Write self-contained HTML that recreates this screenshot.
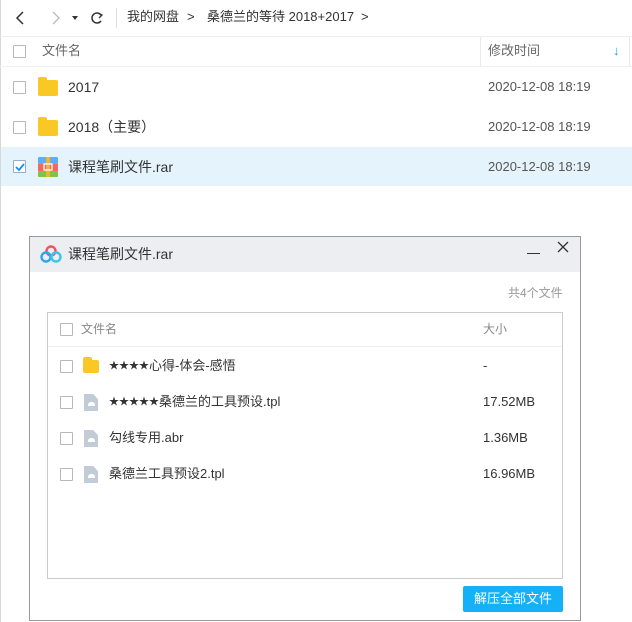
<!DOCTYPE html>
<html><head><meta charset="utf-8"><style>
*{margin:0;padding:0;box-sizing:border-box}
body{width:632px;height:622px;background:#fff;font-family:"Liberation Sans","Noto Sans CJK SC",sans-serif;font-size:13px;color:#333;position:relative;overflow:hidden}
.a{position:absolute}
.cb{position:absolute;width:13px;height:13px;border:1px solid #b8b8b8;background:#fff;border-radius:1px}
.t{position:absolute;white-space:nowrap;line-height:18px;height:18px}
.s{font-size:10px;vertical-align:1px}
.fold{position:absolute;width:20px;height:16px;background:#f9c824;border-radius:2px}
.fold:before{content:"";position:absolute;left:0;top:-3px;width:9px;height:4px;background:#f9c824;border-radius:2px 2px 0 0}
.doc{position:absolute;width:14px;height:17px;background:#c1ccd7;clip-path:polygon(0 0,65% 0,100% 30%,100% 100%,0 100%)}
.doc:after{content:"";position:absolute;left:4px;top:8px;width:7px;height:4px;background:#fff;border-radius:3px 3px 0 0}
</style></head><body>
<div class="a" style="left:0;top:0;width:1px;height:622px;background:#d8d8d8"></div>
<svg class="a" style="left:14px;top:10px" width="100" height="16" viewBox="0 0 100 16">
<path d="M9 2 L3 8 L9 14" fill="none" stroke="#333" stroke-width="1.5"/>
<path d="M39 2 L45 8 L39 14" fill="none" stroke="#bbb" stroke-width="1.3"/>
<path d="M58 6 L64 6 L61 10 Z" fill="#333"/>
<path d="M87 5 A5 5 0 1 0 87 11" fill="none" stroke="#333" stroke-width="1.5"/>
<path d="M84 3 L88 5 L85 8" fill="none" stroke="#333" stroke-width="1.3"/>
</svg>
<div class="a" style="left:116px;top:8px;width:1px;height:20px;background:#ddd"></div>
<div class="t" style="left:127px;top:8px">我的网盘</div>
<div class="t" style="left:187px;top:8px">&gt;</div>
<div class="t" style="left:207px;top:8px">桑德兰的等待 2018+2017</div>
<div class="t" style="left:361px;top:8px">&gt;</div>
<div class="a" style="left:0;top:36px;width:632px;height:1px;background:#eee"></div>
<div class="cb" style="left:13px;top:45px"></div>
<div class="t" style="left:42px;top:42px;color:#666">文件名</div>
<div class="a" style="left:480px;top:37px;width:1px;height:29px;background:#e8e8e8"></div>
<div class="t" style="left:488px;top:42px;color:#666">修改时间</div>
<div class="t" style="left:613px;top:42px;color:#1a9ff0;font-weight:bold">↓</div>
<div class="a" style="left:629px;top:37px;width:1px;height:29px;background:#e8e8e8"></div>
<div class="a" style="left:0;top:66px;width:632px;height:1px;background:#f0f0f0"></div>
<div class="cb" style="left:13px;top:81px"></div>
<div class="fold" style="left:38px;top:80px"></div>
<div class="t" style="left:68px;top:78px;font-size:14px">2017</div>
<div class="t" style="left:488px;top:78px;color:#555">2020-12-08 18:19</div>
<div class="cb" style="left:13px;top:121px"></div>
<div class="fold" style="left:38px;top:120px"></div>
<div class="t" style="left:68px;top:118px;font-size:14px">2018（主要）</div>
<div class="t" style="left:488px;top:118px;color:#555">2020-12-08 18:19</div>
<div class="a" style="left:1px;top:147px;width:631px;height:39px;background:#e5f4fc"></div>
<div class="cb" style="left:13px;top:160px;border-color:#9ac"></div>
<svg class="a" style="left:14px;top:161px" width="12" height="12"><path d="M2 6 L5 9 L10 3" fill="none" stroke="#1a8ff0" stroke-width="1.8"/></svg>
<svg class="a" style="left:38px;top:157px" width="20" height="20">
<rect x="0" y="0" width="20" height="7" fill="#5bb1f0" rx="1"/>
<rect x="0" y="7" width="20" height="7" fill="#f06a5c"/>
<rect x="0" y="14" width="20" height="6" fill="#7cc548" rx="1"/>
<rect x="8" y="0" width="4" height="20" fill="#f4b133"/>
<rect x="6" y="7" width="8" height="6" fill="none" stroke="#fff" stroke-width="1.3"/>
</svg>
<div class="t" style="left:68px;top:158px;font-size:14px">课程笔刷文件.rar</div>
<div class="t" style="left:488px;top:158px;color:#555">2020-12-08 18:19</div>
<div class="a" style="left:29px;top:236px;width:552px;height:385px;border:1px solid #999;background:#fff"></div>
<div class="a" style="left:30px;top:237px;width:550px;height:35px;background:#edeef2"></div>
<svg class="a" style="left:40px;top:245px" width="22" height="18" viewBox="0 0 22 18">
<circle cx="11" cy="6" r="4.5" fill="none" stroke="#f2545b" stroke-width="2.4"/>
<circle cx="6" cy="12" r="4.5" fill="none" stroke="#2aa6ef" stroke-width="2.4"/>
<circle cx="16" cy="12" r="4.5" fill="none" stroke="#3bc4e8" stroke-width="2.4"/>
</svg>
<div class="t" style="left:68px;top:245px;font-size:14px">课程笔刷文件.rar</div>
<div class="a" style="left:527px;top:253px;width:13px;height:1px;background:#333"></div>
<svg class="a" style="left:557px;top:241px" width="12" height="12"><path d="M1 1 L11 11 M11 1 L1 11" stroke="#333" stroke-width="1.3"/></svg>
<div class="t" style="left:508px;top:284px;font-size:12px;color:#999">共4个文件</div>
<div class="a" style="left:47px;top:312px;width:516px;height:267px;border:1px solid #ccc"></div>
<div class="cb" style="left:60px;top:323px"></div>
<div class="t" style="left:81px;top:320px;font-size:12px;color:#888">文件名</div>
<div class="t" style="left:483px;top:320px;font-size:12px;color:#888">大小</div>
<div class="a" style="left:48px;top:346px;width:514px;height:1px;background:#eee"></div>
<div class="cb" style="left:60px;top:360px"></div>
<div class="fold" style="left:83px;top:360px;width:16px;height:13px"></div>
<div class="t" style="left:109px;top:357px"><span class="s">★★★★</span>心得-体会-感悟</div>
<div class="t" style="left:483px;top:357px">-</div>
<div class="cb" style="left:60px;top:396px"></div>
<div class="doc" style="left:84px;top:394px"></div>
<div class="t" style="left:109px;top:393px"><span class="s">★★★★★</span>桑德兰的工具预设.tpl</div>
<div class="t" style="left:483px;top:393px">17.52MB</div>
<div class="cb" style="left:60px;top:432px"></div>
<div class="doc" style="left:84px;top:430px"></div>
<div class="t" style="left:109px;top:429px">勾线专用.abr</div>
<div class="t" style="left:483px;top:429px">1.36MB</div>
<div class="cb" style="left:60px;top:468px"></div>
<div class="doc" style="left:84px;top:466px"></div>
<div class="t" style="left:109px;top:465px">桑德兰工具预设2.tpl</div>
<div class="t" style="left:483px;top:465px">16.96MB</div>
<div class="a" style="left:463px;top:586px;width:100px;height:26px;background:#14b1f7;border-radius:2px;color:#fff;text-align:center;line-height:26px;font-size:13px">解压全部文件</div>
</body></html>
